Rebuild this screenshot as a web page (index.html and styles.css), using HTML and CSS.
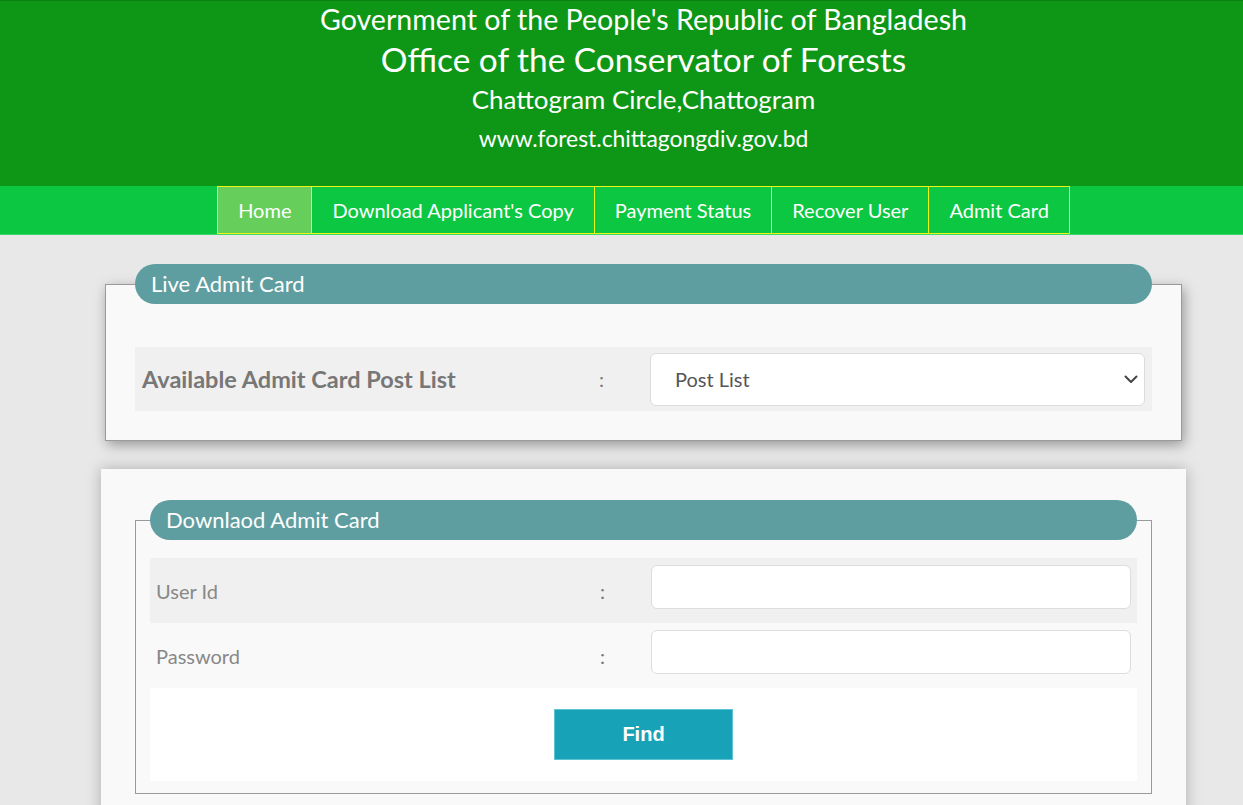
FILE: index.html
```html
<!DOCTYPE html>
<html lang="en">
<head>
<meta charset="utf-8">
<title>Office of the Conservator of Forests</title>
<link rel="stylesheet" href="styles.css">
</head>
<body>
<header class="site-header">
  <div class="h-line1">Government of the People's Republic of Bangladesh</div>
  <div class="h-line2">Office of the Conservator of Forests</div>
  <div class="h-line3">Chattogram Circle,Chattogram</div>
  <div class="h-line4">www.forest.chittagongdiv.gov.bd</div>
</header>
<nav class="nav">
  <ul class="nav-list">
    <li class="nav-item active">Home</li>
    <li class="nav-item">Download Applicant's Copy</li>
    <li class="nav-item">Payment Status</li>
    <li class="nav-item">Recover User</li>
    <li class="nav-item">Admit Card</li>
  </ul>
</nav>
<main class="main">
  <section class="card-live">
    <div class="legend">Live Admit Card</div>
    <div class="row row-live">
      <div class="label-bold">Available Admit Card Post List</div>
      <div class="colon">:</div>
      <div class="select-wrap">
        <select class="select">
          <option>Post List</option>
        </select>
        <svg class="chevron" width="14" height="9" viewBox="0 0 14 9"><path d="M1.5 1.5 L7 7 L12.5 1.5" fill="none" stroke="#444" stroke-width="2" stroke-linecap="round" stroke-linejoin="round"/></svg>
      </div>
    </div>
  </section>
  <section class="card-dl">
    <div class="fieldset">
      <div class="legend legend-dl">Downlaod Admit Card</div>
      <div class="row row-form row-shade">
        <div class="label">User Id</div>
        <div class="colon">:</div>
        <input class="input" type="text">
      </div>
      <div class="row row-form">
        <div class="label">Password</div>
        <div class="colon">:</div>
        <input class="input" type="password">
      </div>
      <div class="row-btn">
        <button class="btn-find" type="button">Find</button>
      </div>
    </div>
  </section>
</main>
</body>
</html>
```
FILE: styles.css
```css
* { box-sizing: border-box; }
html, body { margin: 0; padding: 0; }
body {
  background: #e8e8e8;
  font-family: Lato, "Open Sans", sans-serif;
  height: 805px;
  overflow: hidden;
}
.site-header {
  background: #0e9616;
  border-top: 1px solid #0a7f11;
  height: 186px;
  color: #fff;
  text-align: center;
  padding-left: 44px;
}
.h-line1 { font-size: 28.6px; line-height: 36px; }
.h-line2 { font-size: 33.4px; line-height: 44px; }
.h-line3 { font-size: 25.9px; line-height: 37px; }
.h-line4 { font-size: 22.9px; line-height: 41px; }

.nav {
  background: #0bc742;
  height: 49px;
  border-bottom: 1px solid #3fd86a;
  padding-left: 44px;
  display: flex;
  justify-content: center;
}
.nav-list {
  list-style: none;
  margin: 0;
  padding: 0;
  display: flex;
}
.nav-item {
  height: 48px;
  display: flex;
  align-items: center;
  padding: 0 20px;
  font-size: 20px;
  color: #fff;
  border: 1px solid #eef514;
  border-left-width: 0;
}
.nav-item:first-child { border-left-width: 1px; }
.nav-item.active { background: #66cf5c; }

.main {
  padding: 29px 57px 0 101px;
}
.card-live {
  margin: 20px 4px 0;
  background: #f9f9f9;
  border: 1px solid #9a9a9a;
  box-shadow: 2px 4px 12px rgba(0,0,0,0.35);
  padding: 0 29px 29px;
}
.legend {
  height: 40px;
  margin-top: -21px;
  background: #5f9ea0;
  border-radius: 20px;
  color: #fff;
  font-size: 22px;
  line-height: 40px;
  padding-left: 16px;
}
.row {
  display: grid;
  align-items: center;
}
.row-live {
  margin-top: 43px;
  background: #f0f0f0;
  height: 64px;
  padding: 0 7px;
  grid-template-columns: 457px 51px 1fr;
}
.label-bold {
  font-weight: bold;
  font-size: 23.5px;
  color: #777;
}
.colon {
  color: #777;
  font-size: 20px;
}
.select-wrap {
  position: relative;
  height: 53px;
}
.select {
  appearance: none;
  -webkit-appearance: none;
  width: 100%;
  height: 53px;
  background: #fff;
  border: 1px solid #dcdcdc;
  border-radius: 6px;
  font-family: Lato, "Open Sans", sans-serif;
  font-size: 20px;
  color: #555;
  padding: 0 24px;
  outline: none;
}
.chevron {
  position: absolute;
  right: 7px;
  top: 22px;
}

.card-dl {
  margin-top: 28px;
  background: #f9f9f9;
  box-shadow: 0 0 14px rgba(0,0,0,0.25);
  padding: 51px 34px 30px;
}
.fieldset {
  border: 1px solid #9a9a9a;
  padding: 0 14px 12px;
}
.legend-dl {
  margin-top: -21px;
}
.row-form {
  height: 65px;
  padding: 0 6px;
  grid-template-columns: 444px 51px 1fr;
}
.row-shade { background: #f0f0f0; margin-top: 18px; }
.label {
  font-size: 20px;
  color: #888;
}
.input {
  align-self: start;
  margin-top: 7px;
  height: 44px;
  width: 100%;
  background: #fff;
  border: 1px solid #ddd;
  border-radius: 6px;
  outline: none;
}
.row-btn {
  background: #fff;
  height: 93px;
  display: flex;
  justify-content: center;
  align-items: center;
}
.btn-find {
  width: 179px;
  height: 51px;
  background: #17a2b8;
  border: 1px solid #5cc3d3;
  color: #fff;
  font-family: "Liberation Sans", Arial, sans-serif;
  font-weight: bold;
  font-size: 20px;
  cursor: pointer;
}
```
